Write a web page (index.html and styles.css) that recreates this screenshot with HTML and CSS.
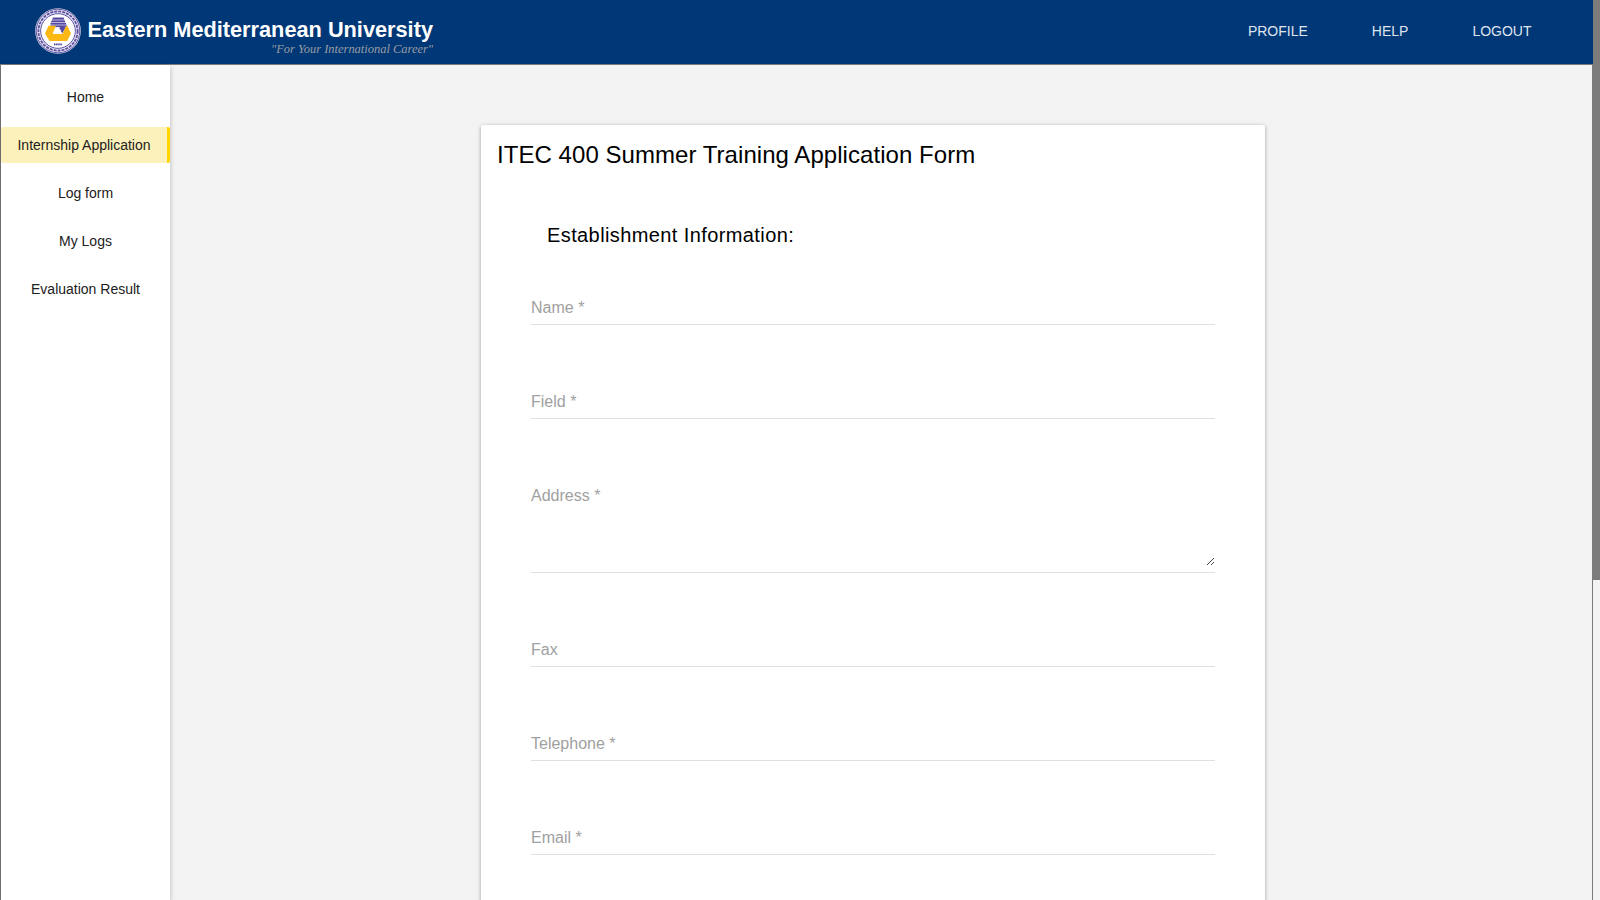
FILE: index.html
```html
<!DOCTYPE html>
<html lang="en">
<head>
<meta charset="utf-8">
<title>ITEC 400 Summer Training Application Form</title>
<link rel="stylesheet" href="styles.css">
</head>
<body>
<div class="window">
  <div class="app">
    <header class="header">
      <svg class="logo" width="404" height="56" viewBox="0 0 404 56">
        <circle cx="23" cy="27" r="22.8" fill="#e4e3f1"/>
        <circle cx="23" cy="27" r="21.8" fill="none" stroke="#43368f" stroke-width=".8"/>
        <circle cx="23" cy="27" r="19.600" fill="none" stroke="#5a4fa0" stroke-width="1.800" stroke-dasharray="3 1"/>
        <circle cx="23" cy="27" r="17.300" fill="none" stroke="#5a4fa0" stroke-width="1"/>
        <circle cx="23" cy="27" r="16.600" fill="#fff"/>
        <path d="M18 13.500h10.500l3.500 8.500-5 7.500-3-6h-8.500v-4.500z" fill="#5549a3"/>
        <path d="M15 16h17M14 18.500h19M14 21h20M20 23.500h14M20 26h12" stroke="#fff" stroke-width=".6"/>
        <path d="M13.500 21.700H21L17.500 29.700H27.500L31 22H32.500L36 29.500L32 36.900H14.500L10 29.500Z" fill="#fdb913"/>
        <path d="M22.500 22.500L27.500 29.700H18.500Z" fill="#fff"/>
        <path d="M24.500 22h6l-3 6.500z" fill="#5549a3"/>
        <path d="M19 40.300h8" stroke="#43368f" stroke-width="1.800" stroke-dasharray="1.500 .6"/>
        <text class="logo-name" x="52.500" y="32.500" textLength="345.500" lengthAdjust="spacingAndGlyphs">Eastern Mediterranean University</text>
        <text class="logo-tag" x="236" y="49" textLength="162" lengthAdjust="spacingAndGlyphs">"For Your International Career"</text>
      </svg>
      <nav class="nav"><a>PROFILE</a><a>HELP</a><a>LOGOUT</a></nav>
    </header>
    <div class="body">
      <aside class="sidebar">
        <a class="item">Home</a>
        <a class="item active">Internship Application</a>
        <a class="item">Log form</a>
        <a class="item">My Logs</a>
        <a class="item">Evaluation Result</a>
      </aside>
      <main class="main">
        <form class="card">
          <h1 class="title">ITEC 400 Summer Training Application Form</h1>
          <h2 class="subtitle">Establishment Information:</h2>
          <div class="fields">
            <div class="field">Name *</div>
            <div class="field">Field *</div>
            <div class="field area">Address *
              <svg class="grip" width="8" height="8" viewBox="0 0 8 8" shape-rendering="crispEdges"><path d="M0 7h1v1H0zM1 6h1v1H1zM2 5h1v1H2zM3 4h1v1H3zM4 3h1v1H4zM5 2h1v1H5zM6 1h1v1H6zM4 7h1v1H4zM5 6h1v1H5zM6 5h1v1H6z" fill="#444"/></svg>
            </div>
            <div class="field">Fax</div>
            <div class="field">Telephone *</div>
            <div class="field">Email *</div>
          </div>
        </form>
      </main>
    </div>
  </div>
  <div class="scrollbar"><div class="thumb"></div></div>
</div>
</body>
</html>
```
FILE: styles.css
```css
* { box-sizing: border-box; }
body { margin: 0; overflow: hidden; font-family: "Liberation Sans", Arial, sans-serif; }
.window { display: flex; height: 900px; background: #f3f3f3; }
.app { width: 1593px; display: flex; flex-direction: column; }
.header { height: 64px; flex: none; background: #003777; display: flex; justify-content: space-between; padding: 4px 61.5px 0 35px; }
.logo { display: block; overflow: visible; }
.logo-name { font: bold 22px "Liberation Sans", Arial, sans-serif; fill: #fff; }
.logo-tag { font: italic 13px "Liberation Serif", serif; fill: #9a9da3; }
.nav { display: flex; gap: 64px; font-size: 14px; line-height: 20px; padding-top: 17px; color: #dfe5ee; }
.body { flex: 1; min-height: 0; display: flex; border: 1px solid #7b7b7b; border-bottom: 0; }
.sidebar { width: 169px; flex: none; background: #fff; padding-top: 14px; display: flex; flex-direction: column; gap: 12px; box-shadow: 0 2px 5px rgba(0,0,0,.26); }
.item { height: 36px; line-height: 36px; font-size: 14px; text-align: center; color: #212121; border-radius: 2px; }
.active { background: #fdf1bb; border-right: 3px solid #ffd600; }
.main { flex: 1; padding: 60px 0 0 311px; overflow: hidden; }
.card { width: 784px; height: 1200px; background: #fff; border-radius: 2px; padding: 16px; box-shadow: 0 1px 3px rgba(0,0,0,.2), 0 1px 5px rgba(0,0,0,.2); }
.title { margin: 0; font-size: 24px; font-weight: 400; line-height: 28px; letter-spacing: .05px; }
.subtitle { margin: 52px 0 0 50px; font-size: 20px; font-weight: 400; line-height: 28px; letter-spacing: .4px; }
.fields { padding: 42px 34px 0; display: flex; flex-direction: column; gap: 60px; }
.field { height: 34px; padding-top: 5px; line-height: 24px; font-size: 16px; color: #a0a0a0; border-bottom: 1px solid #e0e0e0; }
.area { height: 94px; display: flex; justify-content: space-between; }
.grip { align-self: flex-end; margin-bottom: 7px; }
.scrollbar { width: 7px; }
.thumb { height: 580px; background: #7b7b7b; }
```
